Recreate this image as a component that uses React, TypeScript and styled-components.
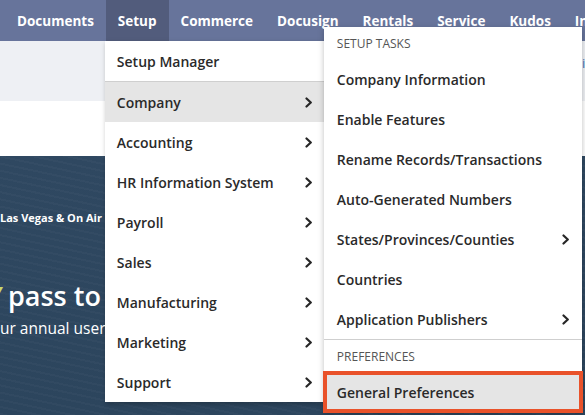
import React from "react";
import styled, { createGlobalStyle } from "styled-components";

const GlobalStyle = createGlobalStyle`
  html, body {
    margin: 0;
    padding: 0;
    width: 585px;
    height: 415px;
    overflow: hidden;
    font-family: "Open Sans", "Liberation Sans", sans-serif;
    background: #fff;
  }
`;

const Page = styled.div`
  position: relative;
  width: 585px;
  height: 415px;
  overflow: hidden;
  display: flex;
  flex-direction: column;
`;

const NavBar = styled.nav`
  display: flex;
  height: 41px;
  padding-left: 5px;
  background: #67749b;
  flex-shrink: 0;
  position: relative;
  z-index: 2;
`;

const NavItem = styled.div<{ $active?: boolean }>`
  position: relative;
  display: flex;
  align-items: center;
  padding: 0 12px;
  color: #fff;
  font-size: 13.5px;
  font-weight: 700;
  white-space: nowrap;
  background: ${(p) => (p.$active ? "#525c7c" : "transparent")};
`;

const SubHeader = styled.div`
  height: 60px;
  background: #eef0f4;
  display: flex;
  align-items: center;
  padding-left: 582px;
  padding-bottom: 16px;
  box-sizing: border-box;
  flex-shrink: 0;
`;

const BlueLink = styled.span`
  color: #3b6fb6;
  font-size: 13px;
`;

const WhiteGap = styled.div`
  height: 55px;
  flex-shrink: 0;
`;

const Banner = styled.section`
  flex: 1;
  background-color: #2e4760;
  background-image: repeating-linear-gradient(
      12deg,
      rgba(255, 255, 255, 0.025) 0 2px,
      transparent 2px 7px
    ),
    linear-gradient(180deg, #2f4861 0%, #2c455d 100%);
  color: #fff;
  display: flex;
  flex-direction: column;
`;

const EventLine = styled.div`
  margin-top: 54px;
  font-size: 11px;
  font-weight: 700;
  white-space: nowrap;
`;

const Headline = styled.div`
  margin-top: 53px;
  margin-left: -13px;
  font-size: 27px;
  font-weight: 600;
  white-space: nowrap;
  line-height: 36px;
`;

const Accent = styled.span`
  color: #c9d86b;
  margin-right: 5px;
`;

const Tagline = styled.div`
  margin-top: 3px;
  font-size: 15.5px;
  white-space: nowrap;
`;

const Menu = styled.div`
  position: absolute;
  top: 41px;
  left: -1px;
  width: 220px;
  background: #fff;
  box-shadow: 1px 2px 5px rgba(0, 0, 0, 0.25);
  border-right: 1px solid #d8d8d8;
  z-index: 3;
`;

const SubMenu = styled.div`
  position: absolute;
  top: -14px;
  left: 219px;
  width: 258px;
  background: #fff;
  box-shadow: 0 2px 6px rgba(0, 0, 0, 0.25);
  z-index: 4;
`;

const Row = styled.div<{ $highlight?: boolean; $selected?: boolean }>`
  height: 40px;
  display: flex;
  align-items: center;
  justify-content: space-between;
  padding: 0 12px 0 12px;
  font-size: 14px;
  font-weight: 600;
  color: #2a2a2a;
  white-space: nowrap;
  background: ${(p) => (p.$highlight || p.$selected ? "#e5e5e5" : "#fff")};
  outline: ${(p) => (p.$selected ? "4px solid #e9522a" : "none")};
  outline-offset: -3px;
`;

const SubRow = styled(Row)`
  padding: 0 12px 0 13px;
`;

const GroupTitle = styled.div`
  height: 32px;
  display: flex;
  align-items: center;
  padding-left: 13px;
  font-size: 12px;
  font-weight: 400;
  color: #555;
  text-transform: uppercase;
`;

const Divider = styled.div`
  height: 1px;
  background: #cfcfcf;
`;

const Chevron = () => (
  <svg width="8" height="11" viewBox="0 0 8 11" style={{ flexShrink: 0 }}>
    <polyline
      points="1.5,1.5 5.8,5.5 1.5,9.5"
      fill="none"
      stroke="#262626"
      strokeWidth="2.2"
      strokeLinecap="round"
      strokeLinejoin="round"
    />
  </svg>
);

const navItems = [
  "Documents",
  "Setup",
  "Commerce",
  "Docusign",
  "Rentals",
  "Service",
  "Kudos",
  "Insights",
];

const mainItems = [
  "Accounting",
  "HR Information System",
  "Payroll",
  "Sales",
  "Manufacturing",
  "Marketing",
  "Support",
];

const setupTasks = [
  { label: "Company Information" },
  { label: "Enable Features" },
  { label: "Rename Records/Transactions" },
  { label: "Auto-Generated Numbers" },
  { label: "States/Provinces/Counties", sub: true },
  { label: "Countries" },
  { label: "Application Publishers", sub: true },
];

export default function App() {
  return (
    <>
      <GlobalStyle />
      <Page>
        <NavBar>
          {navItems.map((name) => (
            <NavItem key={name} $active={name === "Setup"}>
              {name}
              {name === "Setup" && (
                <Menu>
                  <Row>Setup Manager</Row>
                  <Divider />
                  <Row $highlight>
                    Company
                    <Chevron />
                  </Row>
                  {mainItems.map((label) => (
                    <Row key={label}>
                      {label}
                      <Chevron />
                    </Row>
                  ))}
                  <SubMenu>
                    <GroupTitle>Setup Tasks</GroupTitle>
                    {setupTasks.map((t) => (
                      <SubRow key={t.label}>
                        {t.label}
                        {t.sub && <Chevron />}
                      </SubRow>
                    ))}
                    <Divider />
                    <GroupTitle>Preferences</GroupTitle>
                    <SubRow $selected>General Preferences</SubRow>
                  </SubMenu>
                </Menu>
              )}
            </NavItem>
          ))}
        </NavBar>
        <SubHeader>
          <BlueLink>i</BlueLink>
        </SubHeader>
        <WhiteGap />
        <Banner>
          <EventLine>Las Vegas &amp; On Air</EventLine>
          <Headline>
            <Accent>Y</Accent>pass to your conference
          </Headline>
          <Tagline>ur annual user conference</Tagline>
        </Banner>
      </Page>
    </>
  );
}
